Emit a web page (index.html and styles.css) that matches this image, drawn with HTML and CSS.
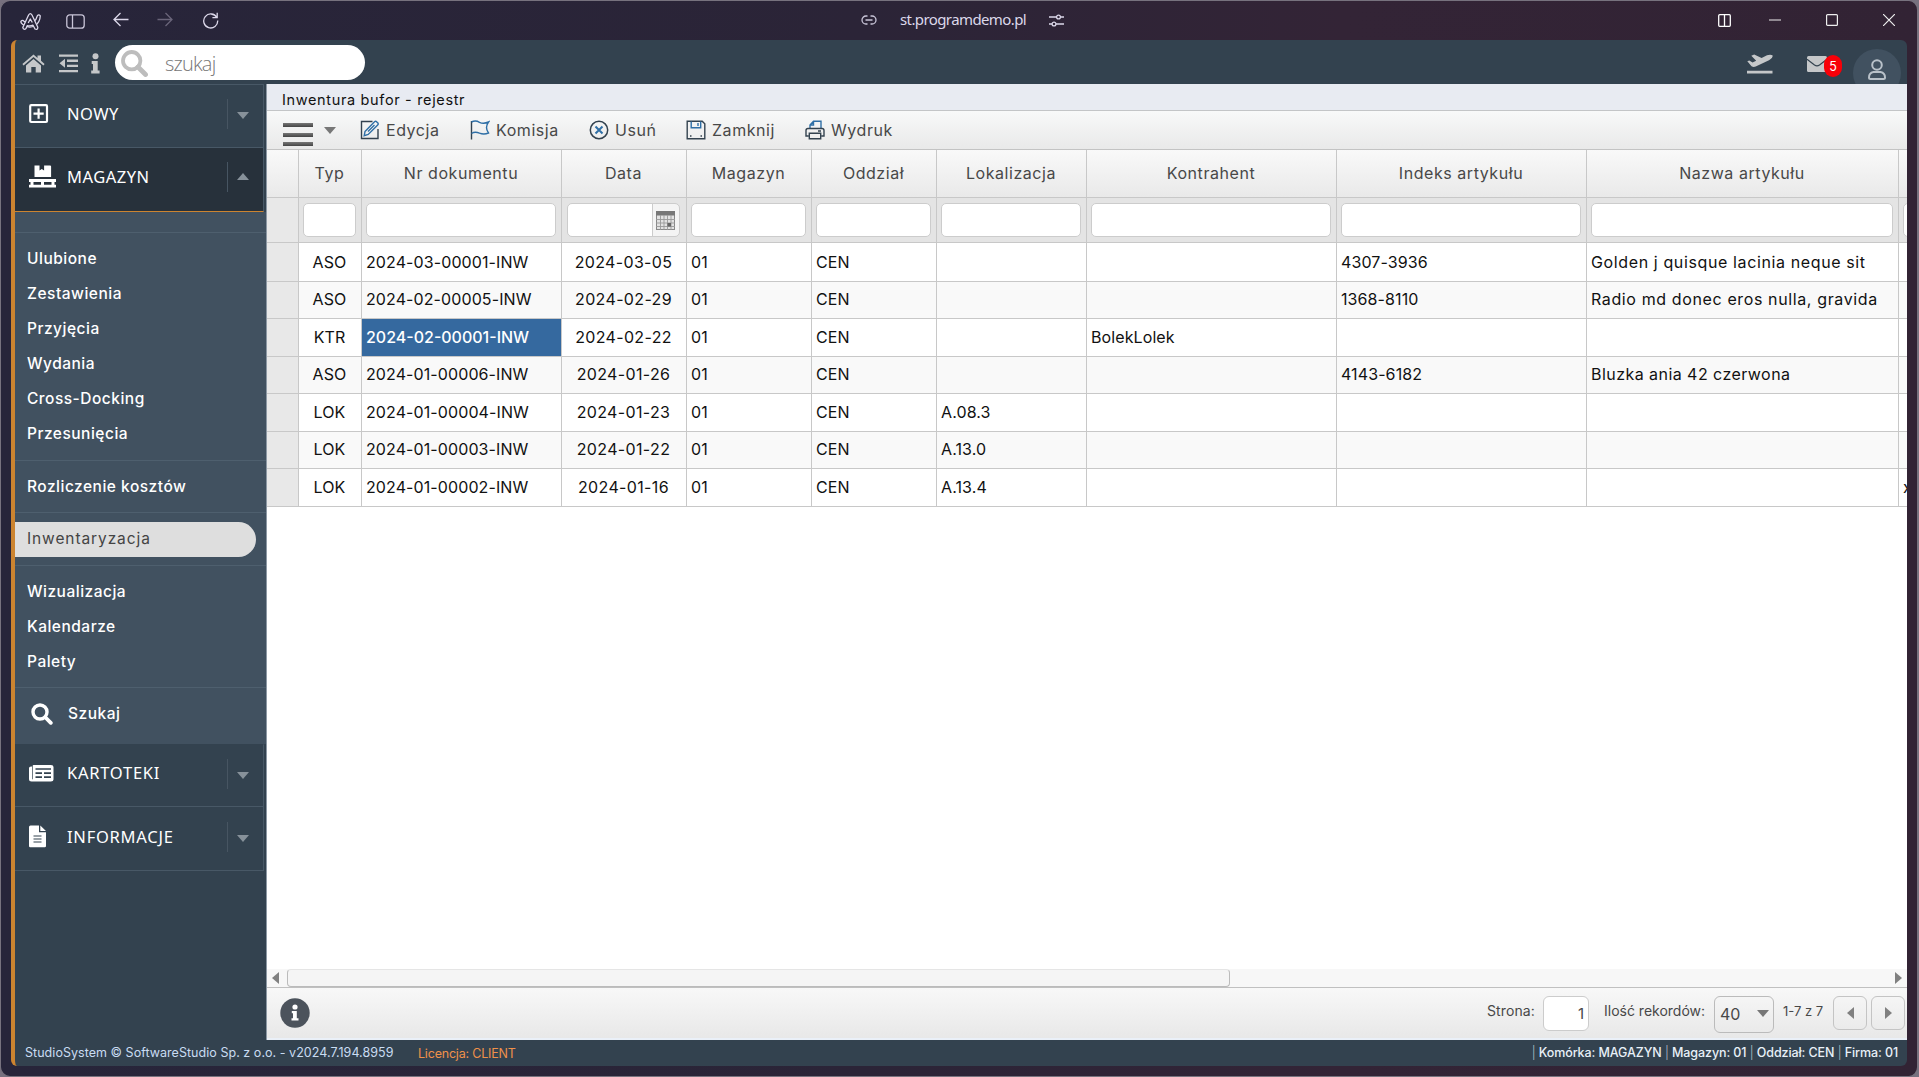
FILE: index.html
```html
<!DOCTYPE html>
<html lang="pl">
<head>
<meta charset="utf-8">
<title>Inwentura bufor - rejestr</title>
<link rel="stylesheet" href="styles.css">
</head>
<body>
<div class="window">
  <header class="chrome">
    <div class="chrome-left">
      <svg class="logo" width="22" height="20" viewBox="0 0 22 20" fill="#28253a" stroke="#dcd8ea" stroke-width="1.300" stroke-linejoin="round"><path d="M1 9.200Q2.600 7.600 4 9.300 8.500 13.500 13.500 9.800 16.500 7.500 17.300 3.800 18.800 1.800 20.300 3.800 20 10.500 14.800 14 8 16.800 2.500 12.300.3 10.500 1 9.200Z"/><path d="M2.800 15.500 8.600 3Q10.300.2 12 3L17.800 15.200Q17.800 18.300 15 17L13 13.200Q10 14.300 7.300 13.600L6 16.500Q3.800 18.500 2.800 15.500Z"/><path d="M8.200 11 10.300 7 12.300 10.500"/></svg>
      <svg width="19" height="15" viewBox="0 0 19 15" fill="none" stroke="#c9c5d8" stroke-width="1.300"><rect x=".8" y=".8" width="17.400" height="13.400" rx="3"/><path d="M6.500 1v13"/></svg>
      <svg width="16" height="15" viewBox="0 0 16 15" fill="none" stroke="#dcd8ea" stroke-width="1.300"><path d="M15.500 7.500H1M7.500 1 1 7.500 7.500 14"/></svg>
      <svg width="16" height="15" viewBox="0 0 16 15" fill="none" stroke="#6a657a" stroke-width="1.300"><path d="M.5 7.500H15M8.500 1 15 7.500 8.500 14"/></svg>
      <svg width="17" height="17" viewBox="0 0 17 17" fill="none" stroke="#dcd8ea" stroke-width="1.300"><path d="M14.800 5.500A7 7 0 1 0 15.700 8.500M15.200.8V5.600H10.400"/></svg>
    </div>
    <div class="chrome-mid">
      <svg width="16" height="10" viewBox="0 0 16 10" fill="none" stroke="#c9c5d8" stroke-width="1.300"><path d="M6.500 1H5a4 4 0 0 0 0 8h1.500M9.500 1H11a4 4 0 0 1 0 8H9.500M4.500 5h7"/></svg>
      <span class="url">st.programdemo.pl</span>
      <svg width="15" height="13" viewBox="0 0 15 13" fill="none" stroke="#dcd8ea" stroke-width="1.300"><path d="M0 3h7.500M11.500 3H15M0 10h3M7 10h8"/><circle cx="9.500" cy="3" r="1.900"/><circle cx="5" cy="10" r="1.900"/></svg>
    </div>
    <div class="chrome-right">
      <svg width="13" height="13" viewBox="0 0 13 13" fill="none" stroke="#fff" stroke-width="1.300"><rect x=".7" y=".7" width="11.600" height="11.600" rx="1"/><path d="M6.500 1v11"/></svg>
      <svg width="12" height="12" viewBox="0 0 12 12" stroke="#eee" stroke-width="1.200"><path d="M0 6h12"/></svg>
      <svg width="12" height="12" viewBox="0 0 12 12" fill="none" stroke="#eee" stroke-width="1.200"><rect x=".6" y=".6" width="10.800" height="10.800" rx="1"/></svg>
      <svg width="12" height="12" viewBox="0 0 12 12" stroke="#eee" stroke-width="1.200"><path d="m0 0 12 12M12 0 0 12"/></svg>
    </div>
  </header>

  <div class="app">
    <div class="topbar">
      <svg class="i-home" width="23" height="19" viewBox="0 0 23 19" fill="#c5c7c9"><path d="M11.500 5 19 11.500V18q0 .6-.6.600H13.700V13H9.300V18.600H4.600Q4 18.600 4 18V11.500Z"/><path d="m11.500.5 4 3.400V1.400h3.500v5.400l3.600 3.100-1.200 1.500L11.500 3 1.600 11.400.4 9.900Z"/></svg>
      <svg class="i-outdent" width="19" height="19" viewBox="0 0 19 19" fill="#c5c7c9"><path d="M0 .5h19v2.300H0ZM8 5.600h11v2.300H8ZM8 10.700h11V13H8ZM0 16h19v2.300H0ZM6 4.800v9L.5 9.300Z"/></svg>
      <svg class="i-info" width="9" height="21" viewBox="0 0 9 21" fill="#c5c7c9"><circle cx="4.500" cy="3.200" r="3"/><path d="M.7 8h6v9.500H8.600V20.600H.2V17.500H2V11H.7Z"/></svg>
      <div class="search">
        <svg width="27" height="27" viewBox="0 0 27 27" fill="none" stroke="#bdbdbd"><circle cx="10.700" cy="10.700" r="8.700" stroke-width="3.800"/><path d="m17 17 7.500 7.500" stroke-width="4.800" stroke-linecap="round"/></svg>
        <span>szukaj</span>
      </div>
      <div class="top-right">
        <svg class="i-plane" width="26" height="20" viewBox="0 0 26 20" fill="#c5c7c9"><path d="M0 16.800h25.500v2.700H0ZM.3 7.200 2.300 6.600 5.500 8.400 9.200 6.700 4.300 1.700 7.200.5 14.600 4 20 1.300Q24 .2 25.700 1.600 25.800 4.200 22 6.200L8.700 12.500Q6.500 13.400 4.500 12.300Z"/></svg>
        <div class="mail">
          <svg width="20" height="16" viewBox="0 0 20 16"><rect width="20" height="16" rx="1.500" fill="#c5c7c9"/><path d="M0 3.200 7.500 9q2.500 1.800 5 0L20 3.200" fill="none" stroke="#33424f" stroke-width="1.200"/></svg>
          <span class="badge">5</span>
        </div>
        <div class="user"><svg width="18" height="21" viewBox="0 0 18 21" fill="none" stroke="#b9c1c9" stroke-width="2"><circle cx="9" cy="6" r="4.800"/><path d="M5.500 13h7q4.500 1 4.500 5.500 0 1.500-1.500 1.500h-13Q1 20 1 18.500 1 14 5.500 13Z"/></svg></div>
      </div>
    </div>

    <div class="body">
      <nav class="sidebar">
        <div class="group">
          <svg width="28" height="20" viewBox="0 0 28 20" fill="none" stroke="#fff"><rect x="1.200" y="1.200" width="16.800" height="16.800" rx="1" stroke-width="2.200"/><path d="M9.600 4.500v10.200M4.500 9.600h10.200" stroke-width="2.200"/></svg>
          <span>NOWY</span><i class="sep"></i><i class="caret down"></i>
        </div>
        <div class="group open">
          <svg width="28" height="23" viewBox="0 0 28 23" fill="#fff"><path d="M5.500.5h5v5l2.300-1.500 2.300 1.500v-5h6q1 0 1 1V12h-16.600Z"/><path d="M0 14h27v3H0ZM0 19.800h27V22.500H0ZM1.500 16h3v5h-3ZM12 16h3v5h-3ZM22.500 16h3v5h-3Z"/></svg>
          <span>MAGAZYN</span><i class="sep"></i><i class="caret up"></i>
        </div>
        <div class="submenu">
          <div class="s-gap"></div>
          <div class="s-block first"><a>Ulubione</a><a>Zestawienia</a><a>Przyjęcia</a><a>Wydania</a><a>Cross-Docking</a><a>Przesunięcia</a></div>
          <div class="s-block"><a>Rozliczenie kosztów</a></div>
          <div class="s-block"><a class="active">Inwentaryzacja</a></div>
          <div class="s-block third"><a>Wizualizacja</a><a>Kalendarze</a><a>Palety</a></div>
          <div class="s-search"><svg width="22" height="22" viewBox="0 0 22 22" fill="none" stroke="#fff"><circle cx="9" cy="9" r="7" stroke-width="3.400"/><path d="m14.500 14.500 5.300 5.300" stroke-width="3.800" stroke-linecap="round"/></svg><span>Szukaj</span></div>
        </div>
        <div class="group cards">
          <svg width="28" height="17" viewBox="0 0 28 17"><path d="M4.500 0H22q2.500 0 2.500 2V14.500q0 2-2.500 2H2.500Q0 16.500 0 14V3Q0 1.500 2 1.500H3V13.500q0 1 .7 1V1Q3.700 0 4.500 0Z" fill="#fff"/><path d="M6.500 4H22M6.500 8.200H13M15 8.200H22M6.500 12.200H13M15 12.200H22" stroke="#33424f" stroke-width="1.700"/></svg>
          <span>KARTOTEKI</span><i class="sep"></i><i class="caret down"></i>
        </div>
        <div class="group">
          <svg width="28" height="23" viewBox="0 0 28 23"><path d="M1.500.5H10V7.200H17V21q0 1.300-1.300 1.300H1.300Q0 22.300 0 21V2Q0 .5 1.500.5ZM11.300.5 17 6H11.300Z" fill="#fff"/><path d="M4.500 11h8M4.500 14h8M4.500 17h8" stroke="#33424f" stroke-width="1.200"/></svg>
          <span>INFORMACJE</span><i class="sep"></i><i class="caret down"></i>
        </div>
      </nav>

      <main class="main">
        <div class="title">Inwentura bufor - rejestr</div>
        <div class="toolbar">
          <div class="burger"><i></i><i></i><i></i></div>
          <i class="caret down dark"></i>
          <button class="t-edit"><svg width="20" height="20" viewBox="0 0 20 20" fill="none" stroke-width="1.400"><path d="M12.500 1.500H1.500v17h16.500V9" stroke="#33424f"/><path d="m5 11.500 9.500-9.700q1.200-1 2.300.1l.9.900q1 1.100 0 2.300L8.200 14.500l-4 1.200ZM8 11.500 14.500 5" stroke="#2f6fa6"/></svg>Edycja</button>
          <button class="t-flag"><svg width="20" height="20" viewBox="0 0 20 20" fill="none" stroke-width="1.400"><path d="M1.500 1v18.500" stroke="#33424f"/><path d="M1.500 2q4-2 8 .3 4 2 9-.3Q14.500 7.500 18.500 13q-4.500 2-9 .2-4.500-2-8 .3" stroke="#2f6fa6"/></svg>Komisja</button>
          <button class="t-del"><svg width="20" height="20" viewBox="0 0 20 20" fill="none" stroke-width="1.500"><circle cx="10" cy="10" r="8.700" stroke="#33424f"/><path d="m6.500 6.500 7 7M13.500 6.500l-7 7" stroke="#2f6fa6" stroke-width="2"/></svg>Usuń</button>
          <button class="t-save"><svg width="20" height="20" viewBox="0 0 20 20" fill="none" stroke-width="1.400"><path d="M1.200 1.200h15l2.600 2.600v15H1.200ZM4 16h1.500M14.500 16H16" stroke="#33424f"/><path d="M5.200 1.500v6.300h9.500V1.500M12 3v3" stroke="#2f6fa6"/></svg>Zamknij</button>
          <button class="t-print"><svg width="20" height="20" viewBox="0 0 20 20" fill="none" stroke-width="1.400"><path d="M5 8V5l3.500-3.800H16V8M5 5h3.500V1.500" stroke="#2f6fa6"/><path d="M3.500 16H1V10.500Q1 8.500 3 8.500H17q2 0 2 2V16H16.500M4.300 13.200H15.700v5.600H4.300ZM13 11h3" stroke="#33424f"/></svg>Wydruk</button>
        </div>
        <div class="grid">
          <div class="row head"><b></b><b>Typ</b><b>Nr dokumentu</b><b>Data</b><b>Magazyn</b><b>Oddział</b><b>Lokalizacja</b><b>Kontrahent</b><b>Indeks artykułu</b><b>Nazwa artykułu</b><b></b></div>
          <div class="row filter"><b></b><b><i></i></b><b><i></i></b><b><i class="date"><svg width="19" height="19" viewBox="0 0 19 19"><rect x=".5" y=".5" width="18" height="18" fill="#e2e2e2" stroke="#888"/><path d="M0 0h19v4.500H0Z" fill="#777"/><path d="M0 8.500h19M0 12h19M0 15.500h19M4.500 4v15M8 4v15M11.500 4v15M15 4v15" stroke="#999" stroke-width=".9"/><path d="M11.500 12H15v3.500h-3.500Z" fill="#666"/></svg></i></b><b><i></i></b><b><i></i></b><b><i></i></b><b><i></i></b><b><i></i></b><b><i></i></b><b><i class="cut"></i></b></div>
          <div class="row r39"><b></b><b>ASO</b><b>2024-03-00001-INW</b><b>2024-03-05</b><b>01</b><b>CEN</b><b></b><b></b><b>4307-3936</b><b class="name">Golden j quisque lacinia neque sit</b><b></b></div>
          <div class="row alt"><b></b><b>ASO</b><b>2024-02-00005-INW</b><b>2024-02-29</b><b>01</b><b>CEN</b><b></b><b></b><b>1368-8110</b><b class="name">Radio md donec eros nulla, gravida</b><b></b></div>
          <div class="row r38"><b></b><b>KTR</b><b class="sel">2024-02-00001-INW</b><b>2024-02-22</b><b>01</b><b>CEN</b><b></b><b>BolekLolek</b><b></b><b></b><b></b></div>
          <div class="row alt"><b></b><b>ASO</b><b>2024-01-00006-INW</b><b>2024-01-26</b><b>01</b><b>CEN</b><b></b><b></b><b>4143-6182</b><b class="name short">Bluzka ania 42 czerwona</b><b></b></div>
          <div class="row r38"><b></b><b>LOK</b><b>2024-01-00004-INW</b><b>2024-01-23</b><b>01</b><b>CEN</b><b>A.08.3</b><b></b><b></b><b></b><b></b></div>
          <div class="row alt"><b></b><b>LOK</b><b>2024-01-00003-INW</b><b>2024-01-22</b><b>01</b><b>CEN</b><b>A.13.0</b><b></b><b></b><b></b><b></b></div>
          <div class="row r38"><b></b><b>LOK</b><b>2024-01-00002-INW</b><b>2024-01-16</b><b>01</b><b>CEN</b><b>A.13.4</b><b></b><b></b><b></b><b>x</b></div>
        </div>
        <div class="hscroll"><i class="arrow left"></i><div class="track"><div class="thumb"></div></div><i class="arrow right"></i></div>
        <div class="pager">
          <svg width="30" height="30" viewBox="0 0 30 30"><circle cx="15" cy="15" r="14.700" fill="#4c535c"/><g fill="#fff"><circle cx="15" cy="9" r="2.600"/><path d="M11.800 13h5v7.200h1.700v2.300h-7v-2.300H13v-5h-1.200Z"/></g></svg>
          <span class="p-label">Strona:</span><span class="p-input">1</span>
          <span class="p-label rec">Ilość rekordów:</span><span class="p-select">40<i class="caret down dark"></i></span>
          <span class="p-range">1-7 z 7</span>
          <span class="p-btn"><i class="arrow left"></i></span><span class="p-btn"><i class="arrow right"></i></span>
        </div>
      </main>
    </div>

    <footer class="status">
      <span class="ver">StudioSystem © SoftwareStudio Sp. z o.o. - v2024.7.194.8959</span>
      <span class="lic">Licencja: CLIENT</span>
      <span class="ctx"><i>|</i> Komórka: MAGAZYN <i>|</i> Magazyn: 01 <i>|</i> Oddział: CEN <i>|</i> Firma: 01</span>
    </footer>
  </div>
</div>
</body>
</html>
```
FILE: styles.css
```css
* { box-sizing: border-box; }
body { margin: 0; background: #77717f; font-family: Inter, "Liberation Sans", sans-serif; font-size: 16px; color: #111; }
i, b { font-style: normal; font-weight: inherit; }
svg { flex: none; display: block; }
.window { height: 1077px; border: 1px solid #77727e; border-right-width: 2px; border-radius: 10px; background: linear-gradient(90deg, #27253a, #2b2437 45%, #332436 70%, #322334); overflow: hidden; padding: 0 10px 0 10px; }

.chrome { height: 39px; display: grid; grid-template-columns: 1fr auto 1fr; align-items: center; padding-bottom: 1px; }
.chrome-left { display: flex; align-items: center; padding-left: 9px; }
.chrome-left svg:nth-child(-n+2) { margin-top: 3px; }
.chrome-left svg + svg { margin-left: 24px; }
.chrome-left svg:nth-child(3), .chrome-left svg:nth-child(4) { margin-left: 28px; margin-top: -1px; }
.chrome-left svg:nth-child(5) { margin-left: 29px; }
.chrome-mid { display: flex; align-items: center; gap: 23px; padding-left: 7px; }
.url { font: 15px/20px "Noto Sans", sans-serif; letter-spacing: -.6px; color: #dcd8ea; width: 126px; white-space: nowrap; margin-top: -3px; }
.chrome-right { display: flex; align-items: center; justify-content: flex-end; padding-right: 12px; }
.chrome-right svg:nth-child(2) { margin-left: 38px; }
.chrome-right svg:nth-child(n+3) { margin-left: 45px; }

.app { height: 1026px; border-left: 4px solid #cc8430; border-radius: 6px; overflow: hidden; background: #33424f; display: flex; flex-direction: column; }
.topbar { height: 44px; flex: none; display: flex; align-items: center; padding-left: 7px; overflow: hidden; }
.i-home, .i-outdent, .i-info { margin-top: 2px; }
.i-outdent { margin-left: 14px; }
.i-info { margin-left: 13px; }
.search { margin-left: 15px; width: 250px; height: 35px; border-radius: 18px; background: #fff; display: flex; align-items: center; padding: 2px 0 0 6px; }
.search span { margin-left: 17px; font: 300 20px/30px "Open Sans", sans-serif; color: #777; letter-spacing: -.8px; padding-top: 2px; }
.top-right { margin-left: auto; display: flex; align-self: stretch; padding-right: 6px; }
.i-plane { margin-top: 14px; }
.mail { display: flex; margin: 16px 0 0 34px; width: 35px; }
.badge { flex: none; width: 18px; height: 22px; margin: -1px 0 0 -3px; border-radius: 9px; background: #f80008; color: #fff; font-size: 12.500px; line-height: 24px; text-align: center; }
.user { margin: 9px 0 0 11px; width: 48px; height: 48px; flex: none; border-radius: 50%; background: #415160; padding: 10px 0 0 15px; }

.body { height: 956px; flex: none; display: flex; }
.sidebar { width: 252px; flex: none; border-right: 1px solid #8c98a4; background: #33424f; }
.group { height: 63px; width: 249px; border-top: 1px solid #485866; border-right: 1px solid #485866; display: flex; align-items: center; padding: 0 0 4px 14px; font: 16.500px/24px "Noto Sans", sans-serif; color: #fff; }
.group span { margin-left: 10px; width: 160px; letter-spacing: .5px; }
.group .sep { width: 1px; height: 30px; background: #475562; }
.group .caret { margin: 3px 0 0 9px; }
.group.open { height: 65px; background: #27313b; border-bottom: 1px solid #cc8430; padding-bottom: 6px; }
.group:last-child { height: 65px; border-bottom: 1px solid #485866; }
.group:last-child span, .group.cards span { letter-spacing: .75px; }
.group.cards { border-top-color: #33424f; height: 62px; }
.group.cards span { margin-top: -2px; }
.caret { width: 0; height: 0; border: 6px solid transparent; flex: none; }
.caret.down { border-top: 7px solid #87919a; border-bottom: 0; }
.caret.up { border-bottom: 7px solid #87919a; border-top: 0; }
.group.open .caret { margin-top: 0; }
.caret.dark { border-top-color: #777; }
.submenu { background: #415160; height: 532px; width: 251px; color: #fff; letter-spacing: .5px; font-weight: 450; font-size: 15.500px; }
.s-gap { height: 20px; }
.s-block { border-top: 1px solid #4e5f6e; padding: 9px 0 8px; }
.submenu a { display: block; height: 35px; line-height: 33px; padding-left: 12px; }
.s-block.first { height: 228px; }
.s-block:nth-child(3) { height: 52px; }
.s-block:nth-child(4) { height: 53px; }
.s-block.third { height: 122px; }
.submenu a.active { width: 241px; background: #dedede; color: #444; font-weight: 400; letter-spacing: .9px; border-radius: 0 18px 18px 0; }
.s-search { border-top: 1px solid #4e5f6e; height: 57px; display: flex; align-items: center; gap: 15px; padding: 0 0 5px 16px; }

.main { flex: 1; min-width: 0; display: flex; flex-direction: column; background: #fff; }
.title { height: 26px; background: #e8ebf2; font-size: 14.500px; line-height: 31px; padding-left: 15px; letter-spacing: .65px; }
.toolbar { height: 39px; border-top: 1px solid #c3c5c7; background: linear-gradient(#f8f9f9, #e9e9e9); display: flex; align-items: center; padding-left: 16px; }
.burger { width: 30px; height: 23px; margin-top: 9px; display: flex; flex-direction: column; justify-content: space-between; }
.burger i { height: 4px; background: linear-gradient(#777, #444); }
.toolbar .caret { margin-left: 11px; }
.toolbar button { border: 0; background: none; padding: 0; font: 400 16px/24px Inter, sans-serif; color: #484848; display: flex; align-items: center; gap: 6px; white-space: nowrap; letter-spacing: .55px; }
.t-edit { width: 110px; margin-left: 24px; }
.t-flag { width: 119px; }
.t-del { width: 97px; }
.t-save { width: 119px; }

.grid { flex: 1; overflow: hidden; }
.row { display: grid; grid-template-columns: 32px 63px 200px 125px 125px 125px 150px 250px 250px 312px 1fr; height: 37px; border-bottom: 1px solid #c8c8c8; line-height: 35px; letter-spacing: .1px; }
.row b { border-right: 1px solid #c8c8c8; padding-left: 4px; white-space: nowrap; overflow: hidden; min-width: 0; }
.row b:last-child { border-right: 0; }
.row b:first-child { background: #e8e8e8; }
.row b:nth-child(2), .row b:nth-child(4) { text-align: center; padding: 0 1px 0 0; }
.row b:nth-child(4) { letter-spacing: .35px; }
.row.r38 { height: 38px; line-height: 37px; }
.row.r39 { height: 39px; line-height: 39px; }
.row.alt { background: #f9f9f9; }
.row .sel { background: #35699f; color: #fff; font-weight: 500; letter-spacing: 0; }
.row .name { letter-spacing: .62px; }
.row .name.short { letter-spacing: .45px; }
.row.head { height: 49px; border-top: 1px solid #c3c3c3; line-height: 46px; background: linear-gradient(#f9f9f9, #e9e9e9); color: #484848; }
.row.head b { text-align: center; padding: 0 1px 0 0; background: none; letter-spacing: .55px; }
.row.filter { height: 45px; background: #e4e4e4; }
.row.filter b { padding: 5px 5px 0 4px; }
.row.filter i { display: block; height: 34px; border: 1px solid #ccc; border-radius: 5px; background: #fff; }
.row.filter i.date { display: flex; justify-content: flex-end; align-items: center; padding-right: 4px; margin: 0 1px 0 1px; background: linear-gradient(90deg, #fff 84px, #ccc 84px, #ccc 85px, #f4f4f4 85px); }
.row.filter i.cut { width: 60px; }

.hscroll { height: 18px; background: #f7f7f7; display: flex; align-items: center; }
.arrow { width: 0; height: 0; border: 6px solid transparent; }
.arrow.left { border-right: 7px solid #808080; border-left: 0; }
.arrow.right { border-left: 7px solid #808080; border-right: 0; }
.hscroll .left { margin-left: 5px; }
.track { flex: 1; height: 18px; margin-left: 8px; }
.thumb { width: 943px; height: 18px; border: 1px solid #bbb; border-top-color: #e5e5e5; border-radius: 4px; background: #f5f5f5; }
.hscroll .right { margin-right: 5px; }
.pager { height: 53px; border-top: 1px solid #c0c0c0; border-bottom: 2px solid #eaf0f8; background: linear-gradient(#f8f8f8, #e8e8e8); display: flex; align-items: flex-start; padding: 8px 2px 0 13px; font-size: 14px; color: #484848; }
.pager > svg { margin-top: 2px; }
.p-label { margin-left: auto; line-height: 30px; width: 56px; letter-spacing: .1px; }
.p-label.rec { margin-left: 15px; width: 110px; white-space: nowrap; letter-spacing: 0; }
.p-input { width: 46px; height: 35px; background: #fff; border: 1px solid #ccc; border-radius: 6px; text-align: right; padding-right: 4px; font-size: 15px; line-height: 34px; }
.p-select { width: 60px; height: 37px; border: 1px solid #bbb; border-radius: 6px; display: flex; align-items: center; justify-content: space-between; padding: 0 4px 2px 5px; font-size: 16px; }
.p-range { margin-left: 9px; width: 50px; line-height: 30px; font-size: 13px; white-space: nowrap; }
.p-btn { width: 34px; height: 34px; border: 1px solid #c4c4c4; border-radius: 6px; display: flex; align-items: center; justify-content: center; }
.p-btn + .p-btn { margin-left: 4px; }

.status { height: 26px; line-height: 25px; font-size: 12.500px; color: #c9dcf2; display: flex; padding: 0 9px 0 10px; white-space: nowrap; }
.ver { width: 393px; letter-spacing: .04px; }
.lic { color: #f0914a; line-height: 27px; letter-spacing: -.2px; }
.ctx { margin-left: auto; color: #e8f0f8; font-weight: 500; letter-spacing: -.09px; }
.ctx i { font-weight: 300; color: #b5c0cc; }
```
